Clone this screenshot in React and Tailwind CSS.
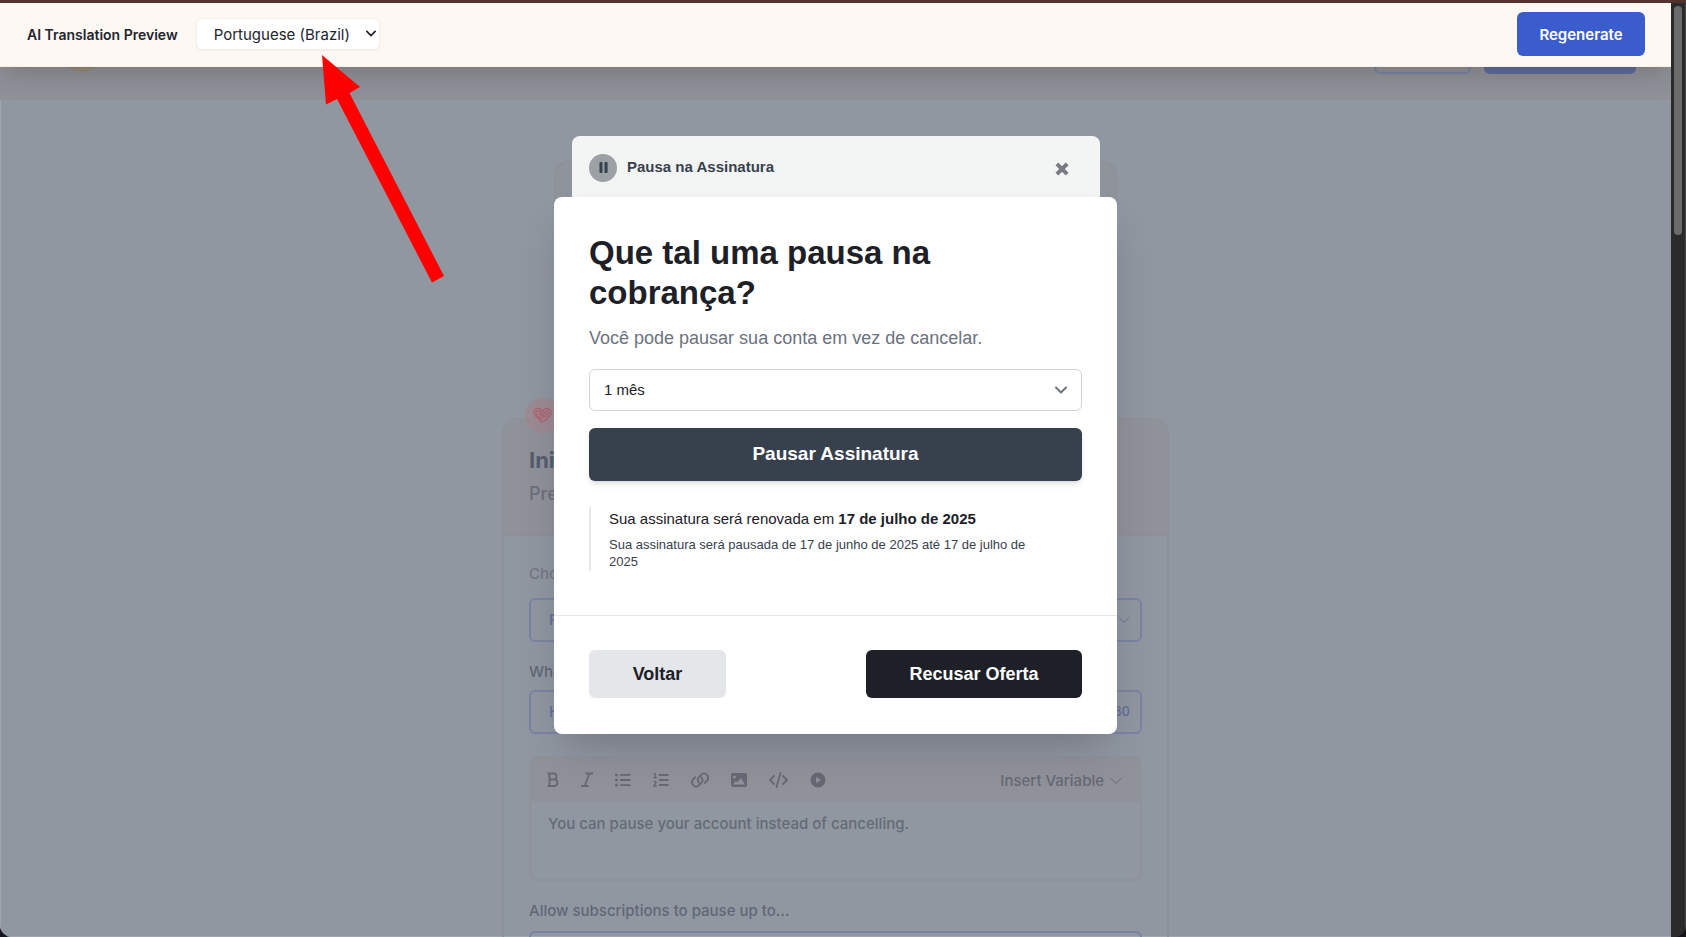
import { useState } from 'react'

function Chevron({ className, strokeWidth = 2 }) {
  return (
    <svg viewBox="0 0 12 8" fill="none" stroke="currentColor" strokeWidth={strokeWidth} className={className} aria-hidden="true">
      <path d="M1 1.5 6 6.5 11 1.5" strokeLinecap="round" strokeLinejoin="round" />
    </svg>
  )
}

const tools = [
  {
    name: 'Bold',
    width: 12,
    art: (
      <path d="M.5 1.5h6a3 3 0 0 1 0 6H2.500M6.500 7.500h1.200a3.300 3.300 0 0 1 0 6.500H.5M2.500 1.500V14" fill="none" stroke="currentColor" strokeWidth="1.900" />
    ),
  },
  {
    name: 'Italic',
    width: 12,
    art: <path d="M4.500 1.500H12M0 14h7.500M8.300 1.500 3.700 14" fill="none" stroke="currentColor" strokeWidth="1.800" />,
  },
  {
    name: 'Bullet list',
    width: 16,
    art: (
      <g fill="currentColor">
        <circle cx="1.500" cy="3" r="1.500" />
        <circle cx="1.500" cy="8" r="1.500" />
        <circle cx="1.500" cy="13" r="1.500" />
        <path d="M5 2h10.500v1.800H5zM5 7.100h10.500v1.800H5zM5 12.200h10.500V14H5z" />
      </g>
    ),
  },
  {
    name: 'Numbered list',
    width: 16,
    art: (
      <g fill="none" stroke="currentColor" strokeWidth="1.400">
        <path d="M.7 1.600h1.400v4M.5 5.700h3.200M.8 10c1.200-1.200 2.600-.3 2.100.8L.8 14h3" />
        <path d="M6 3h9.500M6 8h9.500M6 13h9.500" strokeWidth="1.800" />
      </g>
    ),
  },
  {
    name: 'Link',
    width: 18,
    art: (
      <g fill="none" stroke="currentColor" strokeWidth="1.800" strokeLinecap="round">
        <path d="M8 10.600c-1.800-1.500-1.700-3.700-.4-5.100L10 2.900c1.600-1.700 4-1.700 5.700-.2 1.800 1.700 1.900 4.100.4 5.900l-2.200 2.300" />
        <path d="M10.200 5.400c1.800 1.500 1.700 3.700.4 5.100l-2.400 2.600c-1.600 1.700-4 1.700-5.700.2C.7 11.600.6 9.200 2.100 7.400l2.200-2.300" />
      </g>
    ),
  },
  {
    name: 'Image',
    width: 16,
    art: (
      <path
        fill="currentColor"
        fillRule="evenodd"
        d="M2 1h12a2 2 0 0 1 2 2v10a2 2 0 0 1-2 2H2a2 2 0 0 1-2-2V3a2 2 0 0 1 2-2Zm1.500 2.500a1.500 1.500 0 1 0 0 3 1.500 1.500 0 0 0 0-3ZM2 12.500h12L9.800 6 6.500 10.600 5 8.800Z"
      />
    ),
  },
  {
    name: 'Code',
    width: 19,
    art: (
      <path d="M5 4 1 8l4 4M14 4l4 4-4 4M11.500 1l-4 14" fill="none" stroke="currentColor" strokeWidth="1.800" strokeLinecap="round" strokeLinejoin="round" />
    ),
  },
  {
    name: 'Video',
    width: 16,
    art: <path fill="currentColor" fillRule="evenodd" d="M8 .5a7.500 7.500 0 1 1 0 15 7.500 7.500 0 0 1 0-15ZM6 5v6l5-3Z" />,
  },
]

/* Heart drawn as interlaced diagonal bands */
function HeartIcon() {
  return (
    <svg viewBox="0 0 20 18" fill="none" stroke="currentColor" strokeWidth="1.300" strokeLinejoin="round" className="w-[19px] h-[17px]" aria-hidden="true">
      <path d="M10 16.500 2.300 9.200C.6 7.400.5 4.600 2 2.900 3.700 1 6.400 1 8.100 2.700l5.700 5.700" />
      <path d="M10 16.500 17.700 9.200C19.400 7.400 19.500 4.600 18 2.900 16.300 1 13.600 1 11.900 2.700L10 4.600" />
      <path d="M11.500 11.800 5.700 6M9.800 14 3.700 8C2.700 7 2.700 5.400 3.700 4.500c.8-.8 2.200-.8 3 0l5.800 5.900" />
      <path d="m12 6.700 1.800-1.800c.8-.8 1.800-.7 2.400-.1.700.7.600 1.800-.1 2.500l-2.800 2.700" />
    </svg>
  )
}

function Field({ id, label, muted, children }) {
  return (
    <div className="flex flex-col">
      <label htmlFor={id} className={`leading-5 ${muted ? 'text-[#737784]' : 'text-[#616777]'}`}>
        {label}
      </label>
      {children}
    </div>
  )
}

/* Editor page, dimmed behind the dialog */
function EditorPage() {
  return (
    <div className="flex flex-col items-center text-[15px] font-medium">
      <header className="flex w-full h-[97px] shrink-0 items-center justify-between bg-[#909198] pl-[62px] pr-[35px]">
        <div className="size-10 rounded-full bg-[#958b78]" />
        <div className="flex gap-[13px]">
          <button aria-label="Preview" className="w-[97px] h-11 rounded-md border-2 border-[#7984a5]" />
          <button aria-label="Save" className="w-[152px] h-11 rounded-md bg-[#5f6c98]" />
        </div>
      </header>

      <div className="mt-[60px] h-[218px] w-[563px] shrink-0 rounded-2xl border-2 border-[#8f9199] bg-[#8f939c]" />

      <section className="mt-10 w-[667px] shrink-0 rounded-2xl border-2 border-[#8f9199]">
        <div className="flex h-[116px] flex-col rounded-t-2xl border-b-2 border-[#8f9097] bg-[#90929a] px-[25px]">
          <div className="-mt-[22px] -ml-1 flex size-[35px] shrink-0 items-center justify-center rounded-full bg-[#9c8b93] text-[#b25f6e]">
            <HeartIcon />
          </div>
          <h2 className="mt-[11px] text-[22px] leading-8 font-bold text-[#555e6e]">Initial</h2>
          <p className="mt-1 text-lg leading-7 text-[#6c707b]">Present</p>
        </div>
        <div className="flex flex-col px-[25px] pt-7">
          <Field id="offer" label="Choose" muted>
            <div className="relative mt-3.5">
              <select id="offer" className="h-11 w-full appearance-none rounded-md border-2 border-[#7984a5] px-[18px] text-[#626e98]">
                <option>Pause</option>
              </select>
              <Chevron strokeWidth={1} className="pointer-events-none absolute right-3 top-[18px] w-3 h-2 text-[#6a759c]" />
            </div>
          </Field>
          <div className="mt-5">
            <Field id="headline" label="What">
              <div className="mt-2 flex h-11 items-center rounded-md border-2 border-[#7984a5] px-[10px] text-[#626e98]">
                <input id="headline" defaultValue="How" className="min-w-0 flex-1 bg-transparent pl-2 outline-none" />
                <span className="text-[13px]">80</span>
              </div>
            </Field>
          </div>

          <div className="mt-[22px] h-[125px] overflow-hidden rounded-lg border-2 border-[#90929a]">
            <div className="flex h-11 items-center justify-between bg-[#90929a] pl-4 pr-[18px] text-[#666974]">
              <div className="flex items-center gap-[22px]">
                {tools.map((tool) => (
                  <button key={tool.name} aria-label={tool.name}>
                    <svg width={tool.width} height="16" viewBox={`0 0 ${tool.width} 16`}>
                      {tool.art}
                    </svg>
                  </button>
                ))}
              </div>
              <button className="flex items-center gap-1.5 pt-0.5">
                Insert Variable
                <Chevron strokeWidth={1} className="w-3 h-2" />
              </button>
            </div>
            <textarea
              aria-label="Message"
              defaultValue="You can pause your account instead of cancelling."
              className="block h-[76px] w-full resize-none px-[17px] py-3 leading-5 text-[#656a77] outline-none"
            />
          </div>

          <div className="mt-5">
            <Field id="max-pause" label="Allow subscriptions to pause up to...">
              <select id="max-pause" className="mt-2.5 h-11 appearance-none rounded-md border-2 border-[#7984a5]" />
            </Field>
          </div>
        </div>
      </section>
    </div>
  )
}

function PreviewBar() {
  const [language, setLanguage] = useState('pt-BR')

  return (
    <div className="absolute inset-x-0 top-0 flex h-16 items-center justify-between border-b border-[#f7efe6] bg-[#fdf8f3] pl-[27px] pr-[26px] pb-0.5 shadow-[0_12px_24px_-4px_rgba(0,0,0,0.16)]">
      <div className="flex items-center gap-[18px]">
        <label htmlFor="language" className="pt-0.5 text-[14px] font-semibold text-[#22252d]">
          AI Translation Preview
        </label>
        <div className="relative">
          <select
            id="language"
            value={language}
            onChange={(e) => setLanguage(e.target.value)}
            className="block h-8 w-[184px] appearance-none rounded-md border border-[#f7efe6] bg-white pt-1 pl-[17px] text-[15px] text-[#22252d] shadow-xs"
          >
            <option value="pt-BR">Portuguese (Brazil)</option>
          </select>
          <Chevron className="pointer-events-none absolute right-1 top-3 w-[10px] h-[7px] text-[#22252d]" />
        </div>
      </div>
      <button className="h-11 w-32 rounded-md bg-[#3a5ccc] pt-1 text-[15px] font-semibold text-white">Regenerate</button>
    </div>
  )
}

function PauseDialog() {
  return (
    <div role="dialog" aria-labelledby="dialog-title" className="w-[563px] font-['Liberation_Sans',Arial,sans-serif] text-[#1d2027]">
      <div className="ml-[18px] mr-[17px] flex h-[61px] items-center justify-between rounded-t-lg bg-[#f3f5f4] pt-0.5 pl-[17px] pr-[31px]">
        <div className="flex items-center gap-[10px]">
          <span className="flex size-7 items-center justify-center rounded-full bg-[#9ba1a4]">
            <svg viewBox="0 0 10 12" className="w-[9px] h-[11px]" fill="#37414d" aria-hidden="true">
              <rect x="0.500" width="3.400" height="12" rx="1" />
              <rect x="6.100" width="3.400" height="12" rx="1" />
            </svg>
          </span>
          <span className="text-[15px] font-bold text-[#37414d]">Pausa na Assinatura</span>
        </div>
        <button aria-label="Fechar" className="mt-0.5 text-[#777c84]">
          <svg viewBox="0 0 14 14" className="size-[14px]" fill="none" stroke="currentColor" strokeWidth="4" strokeLinecap="square" aria-hidden="true">
            <path d="m3.300 3.300 7.400 7.400M10.700 3.300l-7.400 7.400" />
          </svg>
        </button>
      </div>

      <div className="rounded-lg bg-white shadow-[0_22px_40px_-12px_rgba(40,30,50,0.28)]">
        <div className="px-[35px] pt-9 pb-11">
          <h1 id="dialog-title" className="text-[33px] leading-10 font-bold">
            Que tal uma pausa na cobrança?
          </h1>
          <p className="mt-[11px] text-[18px] leading-7 text-[#6b7280]">Você pode pausar sua conta em vez de cancelar.</p>
          <div className="relative mt-[17px]">
            <select aria-label="Duração da pausa" className="block h-[42px] w-full appearance-none rounded-md border border-[#d1d5db] bg-white px-3.5 text-[15px]">
              <option>1 mês</option>
            </select>
            <Chevron className="pointer-events-none absolute right-[15px] top-[17px] w-3 h-2 text-[#6b7280]" />
          </div>
          <button className="mt-[17px] h-[53px] w-full rounded-md bg-[#37414d] text-[19px] font-bold text-white shadow-md">
            Pausar Assinatura
          </button>
          <div className="mt-[26px] border-l-2 border-[#e5e7eb] pl-[18px] pr-8 pb-px">
            <p className="text-[15px] leading-6">
              Sua assinatura será renovada em <strong>17 de julho de 2025</strong>
            </p>
            <p className="mt-[5px] text-[13px] leading-[17px] text-[#37414d]">
              Sua assinatura será pausada de 17 de junho de 2025 até 17 de julho de 2025
            </p>
          </div>
        </div>
        <div className="flex justify-between border-t border-[#e5e7eb] px-[35px] pt-[34px] pb-9 text-[18px] font-bold">
          <button className="h-12 w-[137px] rounded-md bg-[#e5e6ea]">Voltar</button>
          <button className="h-12 w-[216px] rounded-md bg-[#1d2027] text-white">Recusar Oferta</button>
        </div>
      </div>
    </div>
  )
}

function App() {
  return (
    <div className="h-screen overflow-hidden bg-[#14141c] font-[Inter,sans-serif]">
      <div className="flex h-full flex-col overflow-hidden rounded-b-xl bg-[#2b2b2b]">
        <div className="h-[3px] shrink-0 bg-[#53322f]" />
        <div className="flex min-h-0 flex-1">
          <main className="relative min-w-0 flex-1 overflow-hidden bg-[#9097a1] shadow-[inset_1px_-1px_0_#a0a5ae]">
            <EditorPage />
            <div className="absolute inset-0 flex items-start justify-center pt-[133px]">
              <PauseDialog />
            </div>
            <PreviewBar />
            <svg viewBox="0 0 124 230" className="pointer-events-none absolute left-[321px] top-[50px] w-[124px] h-[230px]" fill="#ff0000" aria-hidden="true">
              <path d="M1 2 39 34 28.500 40 123 223 111 229.500 16 46 5 51.500Z" />
            </svg>
          </main>
          <div className="w-[15px] shrink-0 border-r border-[#4a4a4a] bg-[#2b2b2b] px-[3px] pt-[3px]">
            <div className="h-[229px] rounded-full bg-[#6b6b6b]" />
          </div>
        </div>
      </div>
    </div>
  )
}

export default App
